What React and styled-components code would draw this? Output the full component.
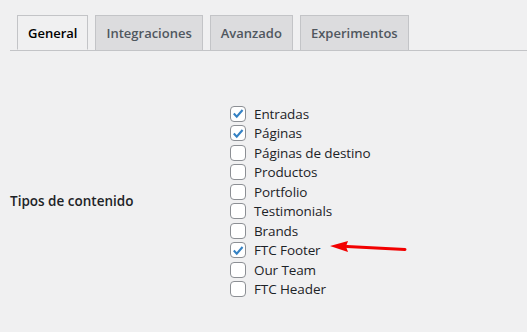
import React from 'react'
import styled, { createGlobalStyle } from 'styled-components'

const GlobalStyle = createGlobalStyle`
  body {
    margin: 0;
    background: #f0f0f1;
    font-family: 'Open Sans', 'Noto Sans', sans-serif;
    color: #1d2327;
  }
`

const tabs = ['General', 'Integraciones', 'Avanzado', 'Experimentos']

const types = [
  { label: 'Entradas', checked: true },
  { label: 'Páginas', checked: true },
  { label: 'Páginas de destino' },
  { label: 'Productos' },
  { label: 'Portfolio' },
  { label: 'Testimonials' },
  { label: 'Brands' },
  { label: 'FTC Footer', checked: true, marked: true },
  { label: 'Our Team' },
  { label: 'FTC Header' },
]

const App = () => {
  return (
    <Wrap>
      <GlobalStyle />
      <TabBar>
        {tabs.map((t, i) => (
          <Tab key={t} active={i === 0}>{t}</Tab>
        ))}
      </TabBar>
      <FormRow>
        <Heading>Tipos de contenido</Heading>
        <List>
          {types.map((t) => (
            <Item key={t.label}>
              <Box>
                {t.checked && (
                  <svg width="15" height="15" viewBox="0 0 20 20">
                    <path d="M4 10 L8.2 14.5 L16.5 5" fill="none" stroke="#3582c4" strokeWidth="3" strokeLinejoin="miter" />
                  </svg>
                )}
              </Box>
              {t.label}
              {t.marked && (
                <Arrow width="80" height="14" viewBox="0 0 80 14">
                  <path d="M17 5.5 L75 8.5" stroke="#f20000" strokeWidth="3" strokeLinecap="round" />
                  <path d="M0 5 L18 0 L16 5.5 L18 11 Z" fill="#f20000" />
                </Arrow>
              )}
            </Item>
          ))}
        </List>
      </FormRow>
    </Wrap>
  )
}

const Wrap = styled.div`
  width: 527px;
  height: 332px;
  padding: 15px 0 0 10px;
  box-sizing: border-box;
  overflow: hidden;
`

const TabBar = styled.div`
  display: flex;
  gap: 7px;
  padding-left: 7px;
  border-bottom: 1px solid #c3c4c7;
  height: 35px;
`

const Tab = styled.div`
  height: 35px;
  box-sizing: border-box;
  padding: 0 10px;
  display: flex;
  align-items: center;
  font-size: 13px;
  font-weight: 600;
  border: 1px solid #c3c4c7;
  border-bottom: ${(p) => (p.active ? '1px solid #f0f0f1' : 'none')};
  background: ${(p) => (p.active ? '#f0f0f1' : '#dcdcde')};
  color: ${(p) => (p.active ? '#000' : '#50575e')};
  margin-bottom: ${(p) => (p.active ? '-1px' : '0')};
`

const FormRow = styled.div`
  display: flex;
  align-items: center;
  padding-top: 53px;
`

const Heading = styled.div`
  width: 220px;
  font-size: 13.5px;
  font-weight: 600;
  padding-bottom: 2px;
`

const List = styled.div`
  display: flex;
  flex-direction: column;
`

const Item = styled.label`
  position: relative;
  display: flex;
  align-items: center;
  gap: 8px;
  height: 19.5px;
  font-size: 13.5px;
  letter-spacing: -0.1px;
`

const Box = styled.span`
  width: 16px;
  height: 16px;
  box-sizing: border-box;
  border: 1px solid #8c8f94;
  border-radius: 4px;
  background: #fff;
  display: flex;
  align-items: center;
  justify-content: center;
`

const Arrow = styled.svg`
  position: absolute;
  left: 100px;
  top: 0;
`

export default App
